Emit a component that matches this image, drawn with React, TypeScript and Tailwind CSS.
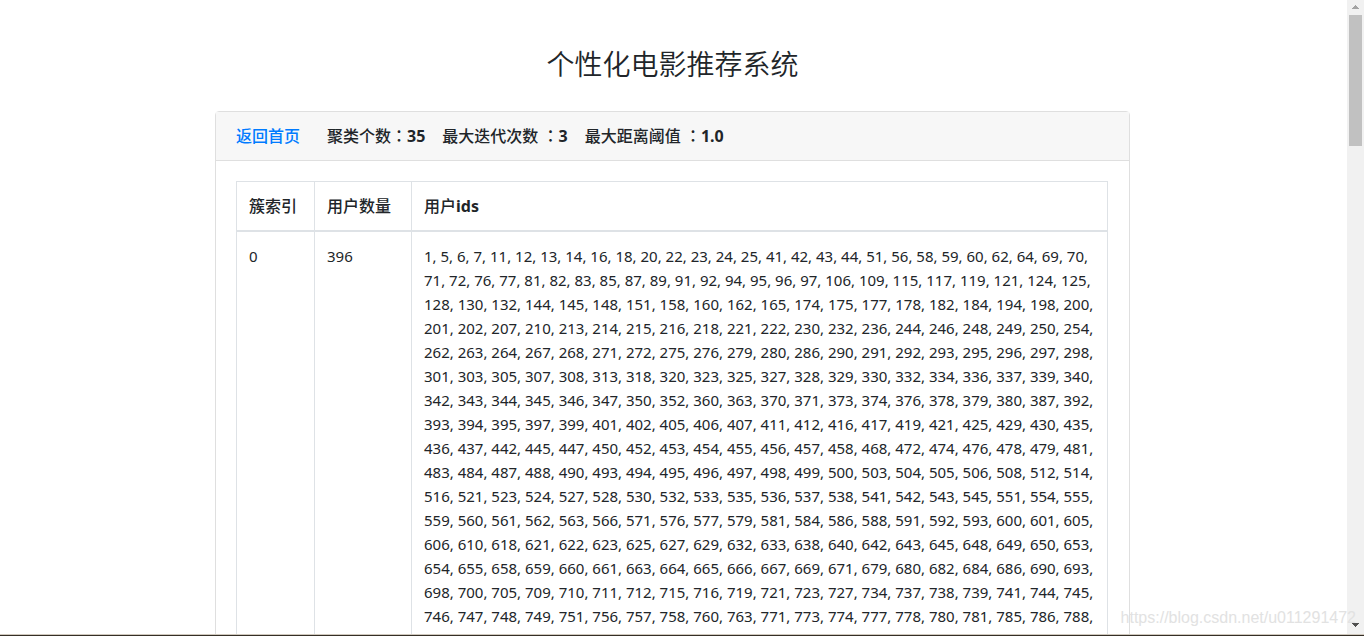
const clusters = [
  {
    index: 0,
    count: 396,
    ids: `1, 5, 6, 7, 11, 12, 13, 14, 16, 18, 20, 22, 23, 24, 25, 41, 42, 43, 44, 51, 56, 58, 59, 60, 62, 64, 69, 70,
71, 72, 76, 77, 81, 82, 83, 85, 87, 89, 91, 92, 94, 95, 96, 97, 106, 109, 115, 117, 119, 121, 124, 125,
128, 130, 132, 144, 145, 148, 151, 158, 160, 162, 165, 174, 175, 177, 178, 182, 184, 194, 198, 200,
201, 202, 207, 210, 213, 214, 215, 216, 218, 221, 222, 230, 232, 236, 244, 246, 248, 249, 250, 254,
262, 263, 264, 267, 268, 271, 272, 275, 276, 279, 280, 286, 290, 291, 292, 293, 295, 296, 297, 298,
301, 303, 305, 307, 308, 313, 318, 320, 323, 325, 327, 328, 329, 330, 332, 334, 336, 337, 339, 340,
342, 343, 344, 345, 346, 347, 350, 352, 360, 363, 370, 371, 373, 374, 376, 378, 379, 380, 387, 392,
393, 394, 395, 397, 399, 401, 402, 405, 406, 407, 411, 412, 416, 417, 419, 421, 425, 429, 430, 435,
436, 437, 442, 445, 447, 450, 452, 453, 454, 455, 456, 457, 458, 468, 472, 474, 476, 478, 479, 481,
483, 484, 487, 488, 490, 493, 494, 495, 496, 497, 498, 499, 500, 503, 504, 505, 506, 508, 512, 514,
516, 521, 523, 524, 527, 528, 530, 532, 533, 535, 536, 537, 538, 541, 542, 543, 545, 551, 554, 555,
559, 560, 561, 562, 563, 566, 571, 576, 577, 579, 581, 584, 586, 588, 591, 592, 593, 600, 601, 605,
606, 610, 618, 621, 622, 623, 625, 627, 629, 632, 633, 638, 640, 642, 643, 645, 648, 649, 650, 653,
654, 655, 658, 659, 660, 661, 663, 664, 665, 666, 667, 669, 671, 679, 680, 682, 684, 686, 690, 693,
698, 700, 705, 709, 710, 711, 712, 715, 716, 719, 721, 723, 727, 734, 737, 738, 739, 741, 744, 745,
746, 747, 748, 749, 751, 756, 757, 758, 760, 763, 771, 773, 774, 777, 778, 780, 781, 785, 786, 788,`,
  },
];

function Colon() {
  return <span className="font-['Noto_Sans_CJK_TC',sans-serif] leading-none">：</span>;
}

function Scrollbar() {
  return (
    <div aria-hidden="true" className="flex w-[17px] shrink-0 flex-col items-center bg-[#f1f1f1]">
      <svg width="17" height="15" viewBox="0 0 17 15" fill="#a3a3a3" shapeRendering="crispEdges">
        <path d="M8 5h1v1h1v1h1v1h1v1H5V8h1V7h1V6h1z" />
      </svg>
      <div className="h-[131px] w-[13px] bg-[#c1c1c1]" />
      <svg className="mt-auto" width="17" height="17" viewBox="0 0 17 17" fill="#505050" shapeRendering="crispEdges">
        <path d="M5 6h7v1h-1v1h-1v1H9v1H8V9H7V8H6V7H5z" />
      </svg>
    </div>
  );
}

export default function App() {
  return (
    <div className="relative flex h-screen flex-col overflow-hidden bg-white font-['Noto_Sans','Noto_Sans_CJK_SC',sans-serif] text-[#212529]">
      <div className="flex min-h-0 flex-1">
        <main className="min-w-0 flex-1 overflow-hidden pt-12 pr-[2px]">
          <h1 className="mb-[30px] text-center text-[28px] leading-[33px] font-[350]">个性化电影推荐系统</h1>
          <section className="mx-auto max-w-[915px] rounded border border-[#dfdfdf]">
            <header className="flex border-b border-[#dfdfdf] bg-[#f7f7f7] px-5 py-3 text-base leading-6 font-medium">
              <a href="#" className="mr-[27px] text-[#007bff]">返回首页</a>
              <p className="flex h-6 gap-[17px]">
                <span>聚类个数<Colon /><b>35</b></span>
                <span>最大迭代次数 <Colon /><b>3</b></span>
                <span>最大距离阈值 <Colon /><b>1.0</b></span>
              </p>
            </header>
            <div className="py-5 pr-[21px] pl-5">
              <table className="w-full table-fixed border-collapse border border-[#dee2e6] text-left">
                <colgroup>
                  <col className="w-[78px]" />
                  <col className="w-[97px]" />
                  <col />
                </colgroup>
                <thead>
                  <tr className="text-base leading-6">
                    <th className="border border-b-2 border-[#dee2e6] p-3 font-medium">簇索引</th>
                    <th className="border border-b-2 border-[#dee2e6] p-3 font-medium">用户数量</th>
                    <th className="border border-b-2 border-[#dee2e6] p-3 font-medium">用户<b>ids</b></th>
                  </tr>
                </thead>
                <tbody>
                  {clusters.map((cluster) => (
                    <tr key={cluster.index} className="align-top text-[15px] leading-6">
                      <td className="border border-[#dee2e6] p-3">{cluster.index}</td>
                      <td className="border border-[#dee2e6] p-3">{cluster.count}</td>
                      <td className="border border-[#dee2e6] p-3">{cluster.ids}</td>
                    </tr>
                  ))}
                </tbody>
              </table>
            </div>
          </section>
        </main>
        <Scrollbar />
      </div>
      <div className="h-[2px] shrink-0 border-t border-[#cfc8bd] bg-[#352f26]" />
      <p className="absolute right-2 bottom-1.5 font-['Liberation_Sans',sans-serif] text-base leading-6 text-[#e2e2e2]">
        https://blog.csdn.net/u011291472
      </p>
    </div>
  );
}
